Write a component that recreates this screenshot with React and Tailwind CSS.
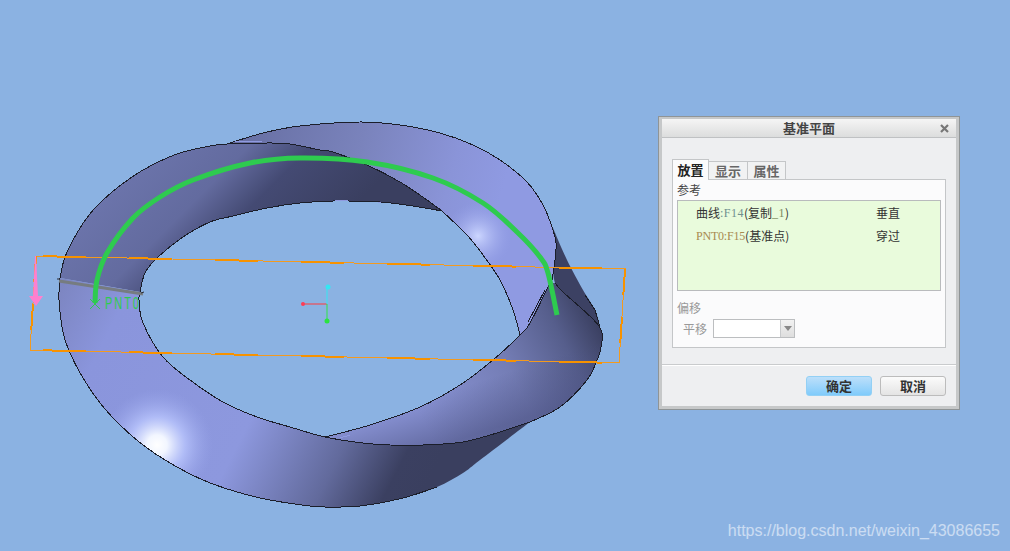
const outerTop = [[60,278],[65,257],[77,233],[89,215],[100,203],[117,188],[143,170],[177,154],[210,146],[227,144],[267,143],[290,144],[320,150],[333,152],[367,165],[400,182],[427,200],[442,211]];
const frontInner = [[140,292],[145,273],[157,258],[183,237],[210,222],[233,216],[267,208],[300,203],[333,201],[380,202],[413,206],[442,211]];
const backOuter = [[227,144],[263,133],[300,126],[360,122],[400,125],[440,133],[473,145],[500,160],[527,182],[543,205],[552,227],[556,243],[555,260],[552,280]];
const backInner = [[442,211],[467,235],[483,255],[500,280],[513,310],[520,335]];
const backUpper = [[442,211],[427,200],[400,182],[367,165],[333,152],[320,150],[290,144],[267,143],[227,144]];
const bottomOuter = [[60,278],[59,300],[63,332],[70,353],[83,378],[100,403],[120,425],[143,445],[170,463],[203,480],[237,492],[270,500],[310,506],[328,507],[360,506],[403,498],[437,487],[463,473],[480,460],[530,422]];
const bottomInner = [[140,292],[139,300],[143,323],[163,357],[190,380],[223,402],[257,417],[290,427],[325,437],[363,443],[390,445],[423,445],[463,442],[500,432],[530,422]];
const twistUpper = [[325,437],[370,425],[420,407],[460,385],[493,360],[520,335],[530,323],[550,283]];
const twistRight = [[555,283],[563,292],[599,326],[601,347],[597,360],[587,380],[560,407],[530,422]];
const arc = [[95,303],[97,280],[107,253],[133,218],[160,197],[193,180],[250,163],[300,158],[367,162],[433,178],[483,203],[517,232],[540,257],[548,273],[557,315]];

// catmull-rom through the traced points
function curve(pts, move = "M") {
  let d = `${move}${pts[0][0]} ${pts[0][1]}`;
  for (let i = 0; i < pts.length - 1; i++) {
    const p0 = pts[i - 1] || pts[i];
    const p1 = pts[i];
    const p2 = pts[i + 1];
    const p3 = pts[i + 2] || p2;
    const c1x = p1[0] + (p2[0] - p0[0]) / 6;
    const c1y = p1[1] + (p2[1] - p0[1]) / 6;
    const c2x = p2[0] - (p3[0] - p1[0]) / 6;
    const c2y = p2[1] - (p3[1] - p1[1]) / 6;
    d += ` C${c1x} ${c1y} ${c2x} ${c2y} ${p2[0]} ${p2[1]}`;
  }
  return d;
}

function shape(...chains) {
  return chains.map((c, i) => curve(c, i === 0 ? "M" : "L")).join(" ") + " Z";
}

const rev = (a) => [...a].reverse();

const backShape = shape(backOuter, [[552,280],[550,283],[530,323],[520,335]], rev(backInner), backUpper);
const frontShape = shape(outerTop, rev(frontInner));
const bottomShape = shape(bottomOuter, rev(bottomInner));
const twistShape = shape(twistUpper, twistRight, rev(bottomInner.slice(7)));
const wedgeShape = shape([[553,228],[567,260],[583,290],[595,310],[600,327]], [[563,292],[555,283],[552,260]]);

function Model() {
  return (
    <svg viewBox="0 0 658 551" className="w-[658px] h-[551px] shrink-0">
      <defs>
        <linearGradient id="front" gradientUnits="userSpaceOnUse" x1="70" y1="190" x2="220" y2="340">
          <stop offset="0" stopColor="#6f78b0" />
          <stop offset="0.45" stopColor="#636b9f" />
          <stop offset="0.66" stopColor="#444a73" />
          <stop offset="1" stopColor="#3a3f60" />
        </linearGradient>
        <linearGradient id="back" gradientUnits="userSpaceOnUse" x1="240" y1="130" x2="500" y2="200">
          <stop offset="0" stopColor="#676fa3" />
          <stop offset="0.45" stopColor="#7a83bc" />
          <stop offset="0.8" stopColor="#8a94d8" />
          <stop offset="1" stopColor="#8f9ae2" />
        </linearGradient>
        <linearGradient id="bottom" gradientUnits="userSpaceOnUse" x1="60" y1="290" x2="430" y2="480">
          <stop offset="0" stopColor="#7d86c2" />
          <stop offset="0.15" stopColor="#8a95dc" />
          <stop offset="0.55" stopColor="#8d98de" />
          <stop offset="0.78" stopColor="#626a9c" />
          <stop offset="0.92" stopColor="#3b4061" />
          <stop offset="1" stopColor="#3a3f5f" />
        </linearGradient>
        <linearGradient id="twist" gradientUnits="userSpaceOnUse" x1="420" y1="415" x2="600" y2="325">
          <stop offset="0" stopColor="#8a94d6" />
          <stop offset="0.5" stopColor="#747db5" />
          <stop offset="0.8" stopColor="#565e8c" />
          <stop offset="1" stopColor="#3a3f60" />
        </linearGradient>
        <linearGradient id="twistShade" gradientUnits="userSpaceOnUse" x1="420" y1="400" x2="435" y2="447">
          <stop offset="0" stopColor="#4a5080" stopOpacity="0" />
          <stop offset="1" stopColor="#4a5080" stopOpacity="0.6" />
        </linearGradient>
        <radialGradient id="shine" gradientUnits="userSpaceOnUse" cx="157" cy="445" r="56">
          <stop offset="0" stopColor="#ffffff" />
          <stop offset="0.18" stopColor="#f2f6ff" />
          <stop offset="0.5" stopColor="#bcc8ff" stopOpacity="0.75" />
          <stop offset="1" stopColor="#9aa6ec" stopOpacity="0" />
        </radialGradient>
        <radialGradient id="shine2" gradientUnits="userSpaceOnUse" cx="478" cy="236" r="34">
          <stop offset="0" stopColor="#ccd6ff" />
          <stop offset="1" stopColor="#97a2ea" stopOpacity="0" />
        </radialGradient>
        <clipPath id="bottomClip"><path d={bottomShape} /></clipPath>
        <clipPath id="backClip"><path d={backShape} /></clipPath>
      </defs>

      <path d={wedgeShape} fill="#3c4163" />
      <path d={backShape} fill="url(#back)" />
      <circle cx="478" cy="236" r="34" fill="url(#shine2)" clipPath="url(#backClip)" />
      <path d={frontShape} fill="url(#front)" />
      <path d={bottomShape} fill="url(#bottom)" />
      <circle cx="157" cy="445" r="56" fill="url(#shine)" clipPath="url(#bottomClip)" />
      <path d={twistShape} fill="url(#twist)" />
      <path d={twistShape} fill="url(#twistShade)" />

      <g fill="none" stroke="#1b1e2a" strokeWidth="1" shapeRendering="crispEdges">
        <path d={curve(outerTop)} />
        <path d={curve(frontInner)} />
        <path d={curve(backOuter)} />
        <path d={curve(backInner)} />
        <path d={curve(bottomOuter.slice(0, 17))} />
        <path d={curve(bottomInner)} />
        <path d={curve(twistUpper)} />
        <path d={curve(twistRight)} />
        <path d="M585 295 L595 310 L600 327" />
        <path d="M545 290 L528 322" />
      </g>

      {/* z-fighting flecks along the edges */}
      <path d="M235 142 L262 141 M335 200 L348 200 M378 202 L381 202 M340 438 L350 435" stroke="#8f9ae0" strokeWidth="1" fill="none" shapeRendering="crispEdges" />

      <path d="M36 256 L625 269 L619 363 L30 350 Z" fill="none" strokeWidth="1" stroke="#f39a1e" shapeRendering="crispEdges" />
      <g fill="none" strokeWidth="2" stroke="#f79200" shapeRendering="crispEdges">
        <path d="M43 256.2 L625 269" strokeDasharray="43 43" />
        <path d="M43 350.3 L619 363" strokeDasharray="43 43" />
        <path d="M625 269 L619 363" strokeDasharray="26 22" />
        <path d="M36 256 L30 350" strokeDasharray="26 22" />
      </g>

      <path d="M59 281 L143 294" stroke="#767c80" strokeWidth="3" fill="none" />
      <path d="M57 279 L60 279 M141 293 L144 292" stroke="#2a2d36" strokeWidth="1" fill="none" />

      <path d={curve(arc)} fill="none" stroke="#2ecb4f" strokeWidth="5" />

      <path d="M90 309 L100 299 M90 299 L100 309" stroke="#2ecb4f" strokeWidth="1" />
      <text transform="translate(105 309) scale(0.68 1)" fontSize="16" letterSpacing="3" fill="#2ecb4f" fontFamily="Liberation Sans, sans-serif">PNT0</text>

      <path d="M35 256 L36 256 L38 296 L33 296 Z" fill="#ff80cf" />
      <path d="M29 296 L43 296 L36 306 Z" fill="#ff80cf" />

      <path d="M303 304 L327 304" stroke="#ff3b3b" strokeWidth="1" />
      <path d="M327 304 L327 287" stroke="#35e6f2" strokeWidth="1" />
      <path d="M327 304 L327 321" stroke="#2fe34a" strokeWidth="1" />
      <circle cx="303" cy="304" r="2" fill="#ff3b55" />
      <circle cx="328" cy="287" r="2.5" fill="#35e6f2" />
      <circle cx="327" cy="321" r="2.5" fill="#2be33f" />
    </svg>
  );
}

function Row({ name, cond }) {
  return (
    <div className="flex items-center h-[23px] pl-[18px] text-[12px] text-[#333]">
      <span className="w-[180px] flex items-center whitespace-nowrap">{name}</span>
      <span>{cond}</span>
    </div>
  );
}

const latin = "font-['Liberation_Serif',serif] text-[12px]";

function Dialog() {
  return (
    <div className="mt-[116px] w-[302px] h-[294px] shrink-0 border border-[#8f9496] bg-[#c6c8c9] pt-[2px] px-[3px] pb-[3px] flex flex-col">
      <div className="flex-1 flex flex-col bg-[#eeeff1]">
        <div className="relative h-[19px] shrink-0 flex items-center justify-center border-b border-[#bfc1c3] bg-gradient-to-b from-[#f5f5f5] to-[#dcdddd] text-[13px] font-bold text-[#444]">
          基准平面
          <svg className="absolute right-[7px] top-[5px]" width="9" height="9" viewBox="0 0 9 9">
            <path d="M1 1 L8 8 M8 1 L1 8" stroke="#777" strokeWidth="2.2" />
          </svg>
        </div>
        <div className="px-[10px] pt-[21px] flex flex-col">
          <div className="flex items-end h-[20px]">
            <div className="w-[37px] h-[21px] relative z-10 -mb-px bg-[#fbfbfc] border border-b-0 border-[#c4c6c8] text-[13px] font-bold text-[#222] text-center leading-[20px]">放置</div>
            <div className="w-[39px] h-[18px] border-t border-r border-[#c4c6c8] bg-[#f1f2f3] text-[13px] font-bold text-[#666] text-center leading-[18px]">显示</div>
            <div className="w-[38px] h-[18px] border-t border-r border-[#c4c6c8] bg-[#f1f2f3] text-[13px] font-bold text-[#666] text-center leading-[18px]">属性</div>
          </div>
          <div className="h-[169px] bg-[#fbfbfc] border border-[#c4c6c8] px-[4px] flex flex-col">
            <div className="h-[20px] text-[12px] leading-[20px] text-[#444]">参考</div>
            <div className="h-[91px] border border-[#b9bbbd] bg-[#e9fbdc]">
              <Row
                name={
                  <>
                    曲线
                    <span className={`${latin} tracking-[0.5px] text-[#6f8f8f]`}>:F14</span>
                    (复制
                    <span className={`${latin} tracking-[0.5px] text-[#7c8a5c]`}>_1</span>)
                  </>
                }
                cond="垂直"
              />
              <Row
                name={
                  <>
                    <span className={`${latin} tracking-[-0.2px] text-[#a88a50]`}>PNT0:F15</span>
                    (基准点)
                  </>
                }
                cond="穿过"
              />
            </div>
            <div className="mt-[9px] h-[16px] text-[12px] leading-[16px] text-[#999]">偏移</div>
            <div className="mt-[3px] flex items-center">
              <span className="ml-[6px] w-[30px] text-[12px] text-[#999]">平移</span>
              <div className="w-[82px] h-[19px] flex border border-[#bcbec0] bg-white">
                <div className="flex-1" />
                <div className="w-[14px] border-l border-[#c8cacc] bg-gradient-to-b from-[#f2f2f2] to-[#dedede] flex items-center justify-center">
                  <svg width="8" height="5" viewBox="0 0 8 5"><path d="M0 0 H8 L4 5 Z" fill="#888" /></svg>
                </div>
              </div>
            </div>
          </div>
        </div>
        <div className="mt-[16px] border-t border-[#c9cbcd] shadow-[0_1px_0_#ffffff]" />
        <div className="flex justify-end gap-[8px] pr-[10px] pt-[11px]">
          <button className="w-[66px] h-[20px] rounded-[3px] border border-[#93d0f5] bg-gradient-to-b from-[#bcdffa] to-[#7fcbfb] text-[13px] font-bold text-[#333] leading-[18px]">确定</button>
          <button className="w-[66px] h-[20px] rounded-[3px] border border-[#bcbcbc] bg-gradient-to-b from-[#fbfbfb] to-[#e4e4e4] text-[13px] font-bold text-[#333] leading-[18px]">取消</button>
        </div>
      </div>
    </div>
  );
}

export default function App() {
  return (
    <div className="relative w-[1010px] h-[551px] overflow-hidden flex items-start bg-[#8bb2e2] font-['Noto_Sans_CJK_SC','Liberation_Sans',sans-serif]">
      <Model />
      <Dialog />
      <div className="absolute right-[10px] top-[521px] font-['Liberation_Sans',sans-serif] text-[16px] leading-[20px] text-white/55 whitespace-nowrap">
        https://blog.csdn.net/weixin_43086655
      </div>
    </div>
  );
}
